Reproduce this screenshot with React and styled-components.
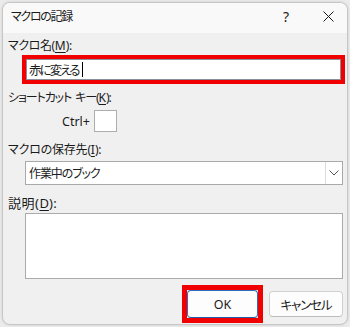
import React from "react";
import styled, { createGlobalStyle } from "styled-components";

const Global = createGlobalStyle`
  html, body { margin: 0; padding: 0; background: #ebebeb; }
  body {
    font-family: "Noto Sans", "Noto Sans CJK JP", sans-serif;
    font-size: 12px;
    color: #1b1b1b;
  }
  * { box-sizing: border-box; }
`;

const Dialog = styled.div`
  margin: 2px;
  width: 346px;
  height: 323px;
  border: 1px solid #c6c6c6;
  border-radius: 8px;
  background: #f0f0f0;
  overflow: hidden;
  display: flex;
  flex-direction: column;
  box-shadow: 0 0 3px rgba(0, 0, 0, 0.12);
`;

const TitleBar = styled.div`
  height: 30px;
  padding-bottom: 3px;
  display: flex;
  align-items: center;
  background: #f9f9f9;
  flex-shrink: 0;
`;

const Title = styled.div`
  flex: 1;
  padding-left: 8px;
  font-size: 12px;
  letter-spacing: -1.3px;
  font-feature-settings: "palt";
  line-height: 16px;
`;

const TitleButton = styled.div`
  width: ${(p) => p.$w}px;
  height: 22px;
  display: flex;
  align-items: center;
  justify-content: center;
  font-size: 14px;
  color: #1b1b1b;
`;

const Body = styled.div`
  flex: 1;
  display: flex;
  flex-direction: column;
  padding: 0 4px 0 5px;
`;

const Label = styled.div`
  line-height: 16px;
  margin-top: ${(p) => p.$mt}px;
  letter-spacing: ${(p) => p.$ls || 0}px;
  font-size: ${(p) => p.$fs || 12}px;
  font-feature-settings: "palt";
  white-space: nowrap;
`;

const Gap = styled.span`
  display: inline-block;
  width: 4px;
`;

const Key = styled.span`
  text-decoration: underline;
  text-underline-offset: 2px;
  letter-spacing: 0;
`;

const RedFrame = styled.div`
  margin-top: ${(p) => p.$mt || 0}px;
  margin-left: ${(p) => p.$ml || 0}px;
  width: ${(p) => p.$w}px;
  height: ${(p) => p.$h}px;
  border: ${(p) => p.$b}px solid #f00000;
  display: flex;
`;

const TextInput = styled.div`
  flex: 1;
  background: #fff;
  border: 1px solid #8a8f9c;
  display: flex;
  align-items: center;
  padding-left: 2px;
  font-size: 12.5px;
  letter-spacing: -1.9px;
  font-feature-settings: "palt";
`;

const Caret = styled.span`
  display: inline-block;
  width: 1px;
  height: 15px;
  background: #000;
  margin-left: 3px;
`;

const CtrlRow = styled.div`
  margin-top: 4px;
  margin-left: 54px;
  display: flex;
  align-items: center;
  gap: 4px;
  height: 22px;
`;

const CtrlText = styled.span`
  font-size: 12.5px;
`;

const SmallBox = styled.div`
  width: 23px;
  height: 22px;
  background: #fff;
  border: 1px solid #adadad;
`;

const Select = styled.div`
  margin-top: 3px;
  margin-left: 17px;
  width: 318px;
  height: 24px;
  background: #fff;
  border: 1px solid #a9a9a9;
  display: flex;
  align-items: stretch;
`;

const SelectValue = styled.div`
  flex: 1;
  display: flex;
  align-items: center;
  padding-left: 3px;
  letter-spacing: -1.1px;
  font-feature-settings: "palt";
`;

const SelectArrow = styled.div`
  width: 17px;
  border-left: 1px solid #dcdcdc;
  display: flex;
  align-items: center;
  justify-content: center;
`;

const TextArea = styled.div`
  margin-top: 2px;
  margin-left: 17px;
  width: 318px;
  height: 66px;
  background: #fff;
  border: 1px solid #ababab;
`;

const ButtonRow = styled.div`
  margin-top: 6px;
  display: flex;
  justify-content: flex-end;
  align-items: center;
  gap: 6px;
`;

const Button = styled.div`
  width: ${(p) => p.$w}px;
  height: ${(p) => p.$h}px;
  background: #fdfdfd;
  border: 1px solid ${(p) => (p.$primary ? "#2a6fbf" : "#d0d0d0")};
  border-bottom-color: ${(p) => (p.$primary ? "#1f5fae" : "#bdbdbd")};
  border-radius: 4px;
  display: flex;
  align-items: center;
  justify-content: center;
  font-size: 12.5px;
  letter-spacing: ${(p) => p.$ls || 0}px;
  font-feature-settings: "palt";
`;

export default function App() {
  return (
    <>
      <Global />
      <Dialog>
        <TitleBar>
          <Title>マクロの記録</Title>
          <TitleButton $w={46}>?</TitleButton>
          <TitleButton $w={38}>
            <svg width="11" height="11" viewBox="0 0 11 11">
              <path d="M0.5 0.5 L10.5 10.5 M10.5 0.5 L0.5 10.5" stroke="#1b1b1b" strokeWidth="1" fill="none" />
            </svg>
          </TitleButton>
        </TitleBar>
        <Body>
          <Label $mt={5} $ls={-0.4}>
            マクロ名(<Key>M</Key>):
          </Label>
          <RedFrame $mt={1} $ml={14} $w={323} $h={29} $b={4}>
            <TextInput>
              赤に変える
              <Caret />
            </TextInput>
          </RedFrame>
          <Label $mt={6} $ls={-1.1}>
            ショートカット<Gap />キー(<Key>K</Key>):
          </Label>
          <CtrlRow>
            <CtrlText>Ctrl+</CtrlText>
            <SmallBox />
          </CtrlRow>
          <Label $mt={10} $ls={-0.2}>
            マクロの保存先(<Key>I</Key>):
          </Label>
          <Select>
            <SelectValue>作業中のブック</SelectValue>
            <SelectArrow>
              <svg width="10" height="6" viewBox="0 0 10 6">
                <path d="M0.5 0.5 L5 5 L9.5 0.5" stroke="#555" strokeWidth="1" fill="none" />
              </svg>
            </SelectArrow>
          </Select>
          <Label $mt={10} $fs={13} $ls={0.5}>
            説明(<Key>D</Key>):
          </Label>
          <TextArea />
          <ButtonRow>
            <RedFrame $w={81} $h={38} $b={5}>
              <Button $primary $w={71} $h={28}>
                OK
              </Button>
            </RedFrame>
            <Button $w={74} $h={26} $ls={-1.1}>
              キャンセル
            </Button>
          </ButtonRow>
        </Body>
      </Dialog>
    </>
  );
}
